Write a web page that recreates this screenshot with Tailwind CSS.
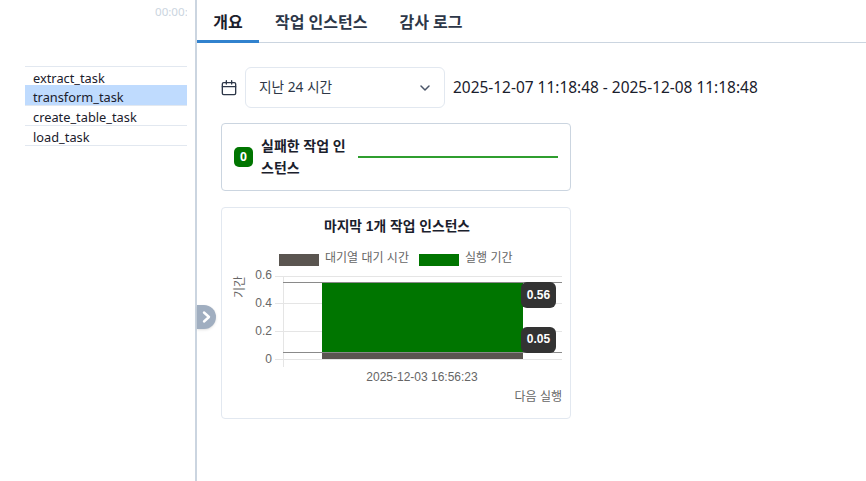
<!DOCTYPE html>
<html lang="ko">
<head>
  <meta charset="UTF-8" />
  <meta name="viewport" content="width=device-width, initial-scale=1.0" />
  <title>작업 개요</title>
  <script src="https://cdn.jsdelivr.net/npm/@tailwindcss/browser@4"></script>
</head>
<body class="bg-white h-[481px] overflow-hidden font-['Noto_Sans','Noto_Sans_CJK_KR',sans-serif] text-[#1a202c]">
  <div class="flex h-[481px]">
    <!-- left: task list -->
    <aside class="w-[197px] shrink-0 border-r-2 border-[#cbd5e0] pl-[25px] pr-[8px] relative">
      <div class="h-[66px] pt-[4px]">
        <div class="ml-auto w-[32px] overflow-hidden whitespace-nowrap text-[11.6px] leading-[16px] text-[#cbd5e0]">00:00:05</div>
      </div>
      <div class="border-t border-[#e2e8f0] text-[12.8px] leading-[19px]">
        <div class="h-[18px] pt-[2px] pl-2">extract_task</div>
        <div class="h-[21px] pt-[3px] pl-2 bg-[#bfdbfe] border-b border-[#e2e8f0]">transform_task</div>
        <div class="h-[20px] pt-[2px] pl-2 border-b border-[#e2e8f0]">create_table_task</div>
        <div class="h-[20px] pt-[2px] pl-2 border-b border-[#e2e8f0]">load_task</div>
      </div>
      <button class="absolute left-[197px] top-[305px] w-[19px] h-[24px] rounded-r-[12px] bg-[#a0aec0] shadow flex items-center justify-center">
        <svg width="12" height="14" viewBox="0 0 12 14" fill="none" stroke="white" stroke-width="2.4" stroke-linecap="round" stroke-linejoin="round"><path d="M3 2.5 8 7l-5 4.5"/></svg>
      </button>
    </aside>

    <!-- right: details -->
    <main class="flex-1 min-w-0">
      <nav class="flex h-[43px] border-b border-[#cbd5e0] text-[16px] font-semibold text-[#2d3748]">
        <div class="w-[62px] h-[43px] text-center leading-[45px] text-[#1a202c] border-b-[3px] border-[#3182ce]">개요</div>
        <div class="ml-[16px] leading-[45px]">작업 인스턴스</div>
        <div class="ml-[32px] leading-[45px]">감사 로그</div>
      </nav>

      <div class="pl-[24px] pt-[24px]">
        <div class="flex items-center h-[41px]">
          <svg class="w-[16px] h-[16px] mr-[8px] text-[#2d3748]" viewBox="0 0 24 24" fill="none" stroke="currentColor" stroke-width="2" stroke-linecap="round" stroke-linejoin="round"><rect x="2" y="4" width="20" height="18" rx="2"/><path d="M16 1v5M8 1v5M2 10h20"/></svg>
          <div class="w-[200px] h-[41px] border border-[#e2e8f0] rounded-[6px] flex items-center justify-between pl-[13px] pr-[13px] text-[13.7px] text-[#2d3748]">
            <span>지난 24 시간</span>
            <svg class="w-[12px] h-[12px] text-[#4a5568]" viewBox="0 0 12 12" fill="none" stroke="currentColor" stroke-width="1.5" stroke-linecap="round" stroke-linejoin="round"><path d="M2 4l4 4 4-4"/></svg>
          </div>
          <span class="ml-[8px] text-[15.45px] whitespace-nowrap">2025-12-07 11:18:48 - 2025-12-08 11:18:48</span>
        </div>

        <div class="mt-[15px] w-[350px] h-[68px] border border-[#cbd5e0] rounded-[4px] flex items-center pl-[12px] pr-[12px]">
          <span class="w-[19px] h-[20px] rounded-[5px] bg-[#007500] text-white text-[12px] font-bold flex items-center justify-center shrink-0">0</span>
          <div class="w-[90px] ml-[8px] mr-[7px] text-[14px] leading-[22px] font-bold break-all shrink-0">실패한 작업 인스턴스</div>
          <div class="w-[200px] h-[2px] bg-[#2f9e2f] shrink-0"></div>
        </div>

        <div class="mt-[16px] w-[350px] h-[212px] border border-[#e2e8f0] rounded-[4px] relative font-['Liberation_Sans','Noto_Sans_CJK_KR',sans-serif]">
          <svg width="348" height="210" viewBox="222 208 348 210" class="absolute left-0 top-0">
            <text x="397" y="231" text-anchor="middle" font-size="13.8" font-weight="700" fill="#1a202c">마지막 1개 작업 인스턴스</text>
            <rect x="279" y="254" width="40" height="12" fill="#5a5550"/>
            <text x="325" y="262" font-size="12" fill="#666">대기열 대기 시간</text>
            <rect x="419" y="254" width="40" height="12" fill="#007500"/>
            <text x="465" y="262" font-size="12" fill="#666">실행 기간</text>
            <text transform="translate(244 298) rotate(-90)" font-size="12" fill="#666">기간</text>
            <g stroke="#e5e5e5" stroke-width="1">
              <path d="M275 276.5H562M275 303.5H562M275 331.5H562M275 359.5H562"/>
              <path d="M283.5 276V367"/>
            </g>
            <g font-size="12" fill="#666" text-anchor="end">
              <text x="272" y="279">0.6</text>
              <text x="272" y="307">0.4</text>
              <text x="272" y="335">0.2</text>
              <text x="272" y="363">0</text>
            </g>
            <rect x="322" y="282" width="201" height="71" fill="#007500"/>
            <rect x="322" y="352" width="201" height="7" fill="#5a5550"/>
            <path d="M283 282.5H562M283 352.5H562" stroke="#8a8a8a" stroke-width="1"/>
            <rect x="521" y="282" width="35" height="26" rx="6" fill="#333"/>
            <text x="538.5" y="299" text-anchor="middle" font-size="12" font-weight="700" fill="#fff">0.56</text>
            <rect x="521" y="327" width="35" height="26" rx="6" fill="#333"/>
            <text x="538.5" y="343" text-anchor="middle" font-size="12" font-weight="700" fill="#fff">0.05</text>
            <text x="422" y="381" text-anchor="middle" font-size="12" fill="#666">2025-12-03 16:56:23</text>
            <text x="562" y="401" text-anchor="end" font-size="12" fill="#666">다음 실행</text>
          </svg>
        </div>
      </div>
    </main>
  </div>
</body>
</html>
